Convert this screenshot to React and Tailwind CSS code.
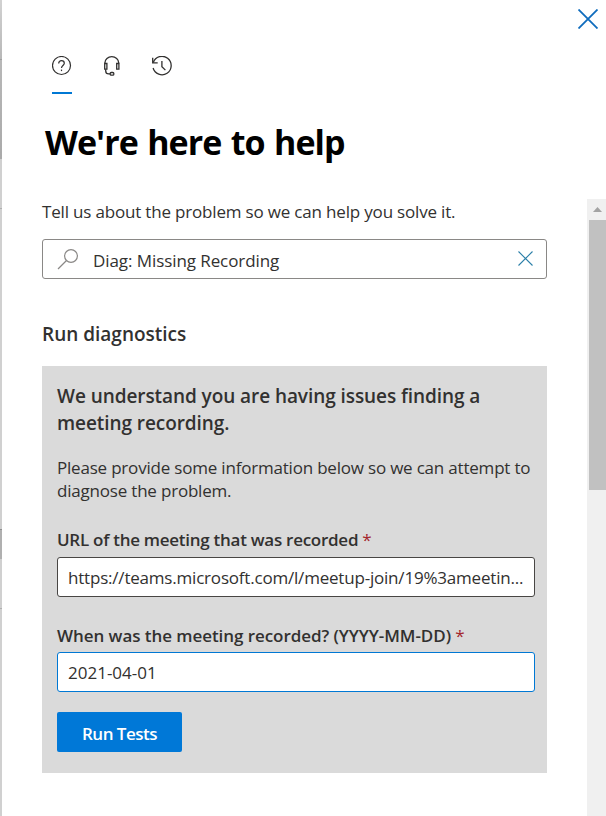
import React, { useState } from "react";

const TABS = [
  { id: "help", label: "Help", icon: HelpIcon },
  { id: "support", label: "Contact support", icon: HeadsetIcon },
  { id: "history", label: "History", icon: HistoryIcon },
];

function HelpIcon() {
  return (
    <svg width="20" height="20" viewBox="0 0 20 20" fill="none" stroke="currentColor" strokeWidth="1.2">
      <circle cx="9.5" cy="9.5" r="9" />
      <path d="M6.700 7.500c0-1.700 1.100-2.900 2.800-2.900s2.800 1.100 2.800 2.600c0 2.100-2.800 2.500-2.800 4.800" />
      <path d="M9.500 13.600v1.500" />
    </svg>
  );
}

function HeadsetIcon() {
  return (
    <svg width="20" height="20" viewBox="0 0 20 20" fill="none" stroke="currentColor" strokeWidth="1.3">
      <path d="M2.900 7.500V7C2.900 3.400 6 .7 9.800 .7S16.700 3.400 16.700 7v.5" />
      <path d="M2.700 7.500h2.200v5.700H2.700z" />
      <path d="M14.700 7.500h2.200v5.700h-2.200z" />
      <path d="M3.700 13.200v1.500c0 2 1.200 3.200 3 3.200h1.500" />
      <rect x="8.200" y="16.500" width="3.600" height="2.700" rx="1" />
    </svg>
  );
}

function HistoryIcon() {
  return (
    <svg width="20" height="20" viewBox="0 0 20 20" fill="none" stroke="currentColor" strokeWidth="1.3">
      <path d="M1.300 6.500A9.200 9.200 0 1 1 1.100 12" />
      <path d="M.7 1.800v5.100h5" />
      <path d="M9.900 5v5.700l3.500 3.400" />
    </svg>
  );
}

function SearchIcon() {
  return (
    <svg width="22" height="22" viewBox="0 0 22 22" fill="none" stroke="#8a8886" strokeWidth="1.2">
      <circle cx="14" cy="8" r="6.4" />
      <path d="M9.500 12.500L1 21" />
    </svg>
  );
}

function CloseIcon({ size, strokeWidth }) {
  return (
    <svg width={size} height={size} viewBox={`0 0 ${size} ${size}`} fill="none" stroke="currentColor" strokeWidth={strokeWidth}>
      <path d={`M.5 .5L${size - 0.5} ${size - 0.5}M${size - 0.5} .5L.5 ${size - 0.5}`} />
    </svg>
  );
}

// Sliver of the dimmed page behind the panel
const PageEdge = () => (
  <div className="flex w-[2px] shrink-0 flex-col bg-[#d0d0d0]">
    <div className="h-[59px] bg-linear-to-b from-[#d2d2d2] to-[#b8b8b8]" />
    <div className="h-[100px] border-t border-[#a0a0a0] bg-linear-to-b from-[#b8b8b8] to-[#aaaaaa]" />
    <div className="h-[50px] border-b border-[#b0b0b0]" />
    <div className="h-[320px]" />
    <div className="h-[30px] border-t border-[#909090] bg-[#b0b0b0]" />
    <div className="h-[50px] border-b border-[#b0b0b0]" />
  </div>
);

const Field = ({ label, value, labelClassName, valueClassName, className }) => (
  <label className="block">
    <span className={`block whitespace-nowrap text-[17px] leading-[26px] font-semibold ${labelClassName}`}>
      {label} <span className="font-normal text-[#a4262c]">*</span>
    </span>
    <span className={`flex h-10 items-center rounded-[3px] border bg-white px-[10px] pt-[2px] text-[17px] ${className}`}>
      <span className={`whitespace-nowrap ${valueClassName}`}>{value}</span>
    </span>
  </label>
);

const App = () => {
  const [activeTab, setActiveTab] = useState("help");

  return (
    <div className="flex h-[816px] w-[606px] overflow-hidden bg-white font-['Open_Sans','Noto_Sans',sans-serif] text-[#323130]">
      <PageEdge />

      <div className="flex min-w-0 flex-1 flex-col">
        {/* Header */}
        <header className="flex h-[199px] shrink-0 justify-between">
          <div className="pt-[56px] pl-[42px]">
            <div className="flex gap-[14px]">
              {TABS.map(({ id, label, icon: Icon }) => (
                <button
                  key={id}
                  onClick={() => setActiveTab(id)}
                  aria-label={label}
                  className="flex w-9 flex-col items-center"
                >
                  <Icon />
                  <span className={`mt-4 h-[2px] w-5 ${activeTab === id ? "bg-[#0078d4]" : "bg-transparent"}`} />
                </button>
              ))}
            </div>
            <h1 className="mt-6 pl-px whitespace-nowrap text-[34px] leading-[48px] font-bold tracking-[-0.95px] [word-spacing:1.5px] text-black">
              We&apos;re here to help
            </h1>
          </div>
          <button aria-label="Close" className="mt-[9px] mr-[8px] h-5 text-[#0f6cbd]">
            <CloseIcon size={20} strokeWidth={1.8} />
          </button>
        </header>

        <div className="flex min-h-0 flex-1">
          {/* Panel content */}
          <main className="w-[585px] shrink-0 px-10">
            <p className="h-10 whitespace-nowrap text-[17px] leading-[26px] tracking-[-0.18px]">
              Tell us about the problem so we can help you solve it.
            </p>
            <div className="flex h-10 items-center rounded-[3px] border border-[#8a8886] pr-[13px] pl-[14px]">
              <SearchIcon />
              <span className="ml-[14px] flex-1 pt-[3px] text-[17px] tracking-[-0.08px]">Diag: Missing Recording</span>
              <span className="pb-[2px] text-[#2b7fa8]">
                <CloseIcon size={15} strokeWidth={1.1} />
              </span>
            </div>
            <h2 className="mt-[41px] text-[19px] leading-7 font-semibold">Run diagnostics</h2>

            <section className="mt-[18px] h-[407px] w-[505px] bg-[#dadada] pt-[17px] pl-[15px]">
              <h3 className="text-[19px] leading-[27px] font-semibold tracking-[-0.07px] whitespace-nowrap">
                We understand you are having issues finding a
                <br />
                meeting recording.
              </h3>
              <p className="mt-[19px] text-[17px] leading-[23px] tracking-[-0.2px] whitespace-nowrap">
                Please provide some information below so we can attempt to
                <br />
                diagnose the problem.
              </p>
              <div className="mt-[25px] flex w-[478px] flex-col gap-[26px]">
                <Field
                  label="URL of the meeting that was recorded"
                  value="https://teams.microsoft.com/l/meetup-join/19%3ameetin..."
                  labelClassName="h-[30px] tracking-[-0.27px]"
                  valueClassName="tracking-[-0.2px]"
                  className="border-[#484644]"
                />
                <Field
                  label="When was the meeting recorded? (YYYY-MM-DD)"
                  value="2021-04-01"
                  labelClassName="h-[29px] tracking-[-0.06px]"
                  className="border-[#0078d4]"
                />
              </div>
              <button className="mt-5 h-10 w-[125px] rounded-[2px] bg-[#0078d7] pt-[3px] text-[17px] font-semibold tracking-[-0.5px] text-white">
                Run Tests
              </button>
            </section>
          </main>

          {/* Scrollbar */}
          <div className="flex w-[19px] shrink-0 flex-col items-end bg-[#f0f0f0]">
            <div className="flex h-[21px] w-[17px] items-center justify-center">
              <svg width="9" height="5" viewBox="0 0 9 5" fill="#a3a3a3">
                <path d="M0 5L4.500 0L9 5z" />
              </svg>
            </div>
            <div className="h-[270px] w-[17px] bg-[#c1c1c1]" />
          </div>
        </div>
      </div>
    </div>
  );
};

export default App;
